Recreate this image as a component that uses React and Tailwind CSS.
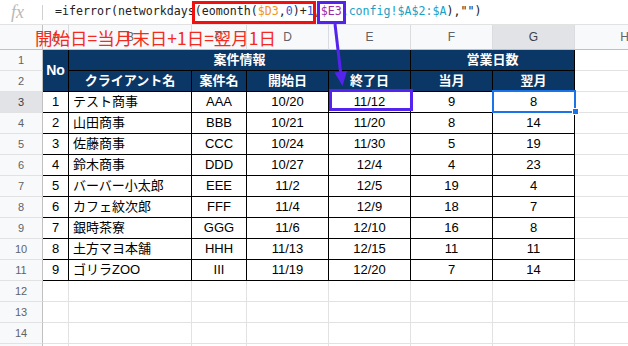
const rows = [
  ['1', 'テスト商事', 'AAA', '10/20', '11/12', '9', '8'],
  ['2', '山田商事', 'BBB', '10/21', '11/20', '8', '14'],
  ['3', '佐藤商事', 'CCC', '10/24', '11/30', '5', '19'],
  ['4', '鈴木商事', 'DDD', '10/27', '12/4', '4', '23'],
  ['5', 'バーバー小太郎', 'EEE', '11/2', '12/5', '19', '4'],
  ['6', 'カフェ紋次郎', 'FFF', '11/4', '12/9', '18', '7'],
  ['7', '銀時茶寮', 'GGG', '11/6', '12/10', '16', '8'],
  ['8', '土方マヨ本舗', 'HHH', '11/13', '12/15', '11', '11'],
  ['9', 'ゴリラZOO', 'III', '11/19', '12/20', '7', '14'],
];

const font = { fontFamily: '"Liberation Sans", "Noto Sans CJK JP", sans-serif' };

function RowHead({ n, active }) {
  return (
    <div
      className={`flex items-center justify-center border-r border-b border-r-[#c0c0c0] border-b-[#e2e2e2] text-[11px] ${
        active ? 'bg-[#e1e3e6] text-[#3c4043]' : 'bg-[#f8f9fa] text-[#5f6368]'
      }`}
    >
      {n}
    </div>
  );
}

function ColHead({ label, active }) {
  return (
    <div
      className={`flex items-center justify-center border-r border-b border-r-[#dadce0] border-b-[#c0c0c0] text-[12px] ${
        active ? 'bg-[#e1e3e6] text-[#3c4043]' : 'bg-[#f8f9fa] text-[#5f6368]'
      }`}
    >
      {label}
    </div>
  );
}

const navy = 'flex items-center justify-center border-r border-b border-black bg-[#0a3766] text-[13px] font-bold text-white';
const cell = 'flex items-center justify-center border-r border-b border-black text-[13px] text-black';
const blank = 'border-r border-b border-[#e2e2e2]';

export default function App() {
  return (
    <div className="relative h-[346px] w-[628px] overflow-hidden bg-white" style={font}>
      {/* formula bar */}
      <div className="flex h-[25px] items-center border-b border-[#e2e2e2]">
        <div className="flex w-[43px] shrink-0 items-center">
          <span className="ml-[11px] font-['Liberation_Serif'] text-[18px] italic text-[#b8b8b8]">fx</span>
          <span className="ml-auto h-[15px] w-px bg-[#d0d0d0]" />
        </div>
        <div className="ml-[12px] whitespace-pre font-['DejaVu_Sans_Mono'] text-[11.62px] text-[#222]">
          =iferror(networkdays(eomonth(
          <span className="text-[#f2961b]">$D3</span>,
          <span className="text-[#2a5bd7]">0</span>)+
          <span className="text-[#2a5bd7]">1</span>,
          <span className="text-[#9a2ca8]">$E3</span>,
          <span className="text-[#1aa0c4]">config!$A$2:$A</span>),"")
        </div>
      </div>

      {/* sheet grid */}
      <div className="grid w-[675px] grid-cols-[43px_26px_123px_55px_82px_82px_82px_82px_100px] grid-rows-[25px] auto-rows-[21px]">
        <div className="border-r border-b border-[#c0c0c0] bg-[#f8f9fa]" />
        {['A', 'B', 'C', 'D', 'E', 'F', 'G', 'H'].map((l) => (
          <ColHead key={l} label={l} active={l === 'G'} />
        ))}

        <RowHead n="1" />
        <div className={`${navy} row-span-2 text-[14px]`}>No</div>
        <div className={`${navy} col-span-4`}>案件情報</div>
        <div className={`${navy} col-span-2`}>営業日数</div>
        <div className={blank} />

        <RowHead n="2" />
        {['クライアント名', '案件名', '開始日', '終了日', '当月', '翌月'].map((h) => (
          <div key={h} className={navy}>{h}</div>
        ))}
        <div className={blank} />

        {rows.map((r, i) => [
          <RowHead key={`h${i}`} n={i + 3} active={i === 0} />,
          <div key={`a${i}`} className={cell}>{r[0]}</div>,
          <div key={`b${i}`} className={`${cell} justify-start pl-[4px]`}>{r[1]}</div>,
          <div key={`c${i}`} className={cell}>{r[2]}</div>,
          <div key={`d${i}`} className={cell}>{r[3]}</div>,
          <div key={`e${i}`} className={cell}>{r[4]}</div>,
          <div key={`f${i}`} className={cell}>{r[5]}</div>,
          <div key={`g${i}`} className={cell}>{r[6]}</div>,
          <div key={`x${i}`} className={blank} />,
        ])}

        {[12, 13, 14, 15].map((n) => [
          <RowHead key={`h${n}`} n={n} />,
          ...[0, 1, 2, 3, 4, 5, 6, 7].map((c) => <div key={`${n}-${c}`} className={blank} />),
        ])}
      </div>

      {/* selection on G3 */}
      <div className="absolute left-[492px] top-[90px] h-[23px] w-[84px] border-2 border-[#1a73e8]" />
      <div className="absolute left-[572px] top-[108px] h-[7px] w-[7px] border border-white bg-[#1a73e8]" />

      {/* annotations */}
      <div className="absolute left-[192px] top-[1px] h-[23px] w-[124px] border-[3px] border-[#f01010]" />
      <div className="absolute left-[317px] top-[1px] h-[23px] w-[29px] border-[3px] border-[#5424ee]" />
      <div className="absolute left-[329px] top-[89px] h-[22px] w-[84px] border-[3px] border-[#5424ee]" />
      <svg className="absolute left-0 top-0" width="628" height="346" viewBox="0 0 628 346">
        <line x1="335" y1="24" x2="341" y2="76" stroke="#5424ee" strokeWidth="3" />
        <polygon points="342.5,86 334.5,72.5 347,71" fill="#5424ee" />
      </svg>
      <div className="absolute left-[35px] top-[28px] font-['Noto_Sans_CJK_JP'] text-[17.5px] leading-[20px] text-[#f42a1e]">
        開始日=当月末日+1日=翌月1日
      </div>
    </div>
  );
}
